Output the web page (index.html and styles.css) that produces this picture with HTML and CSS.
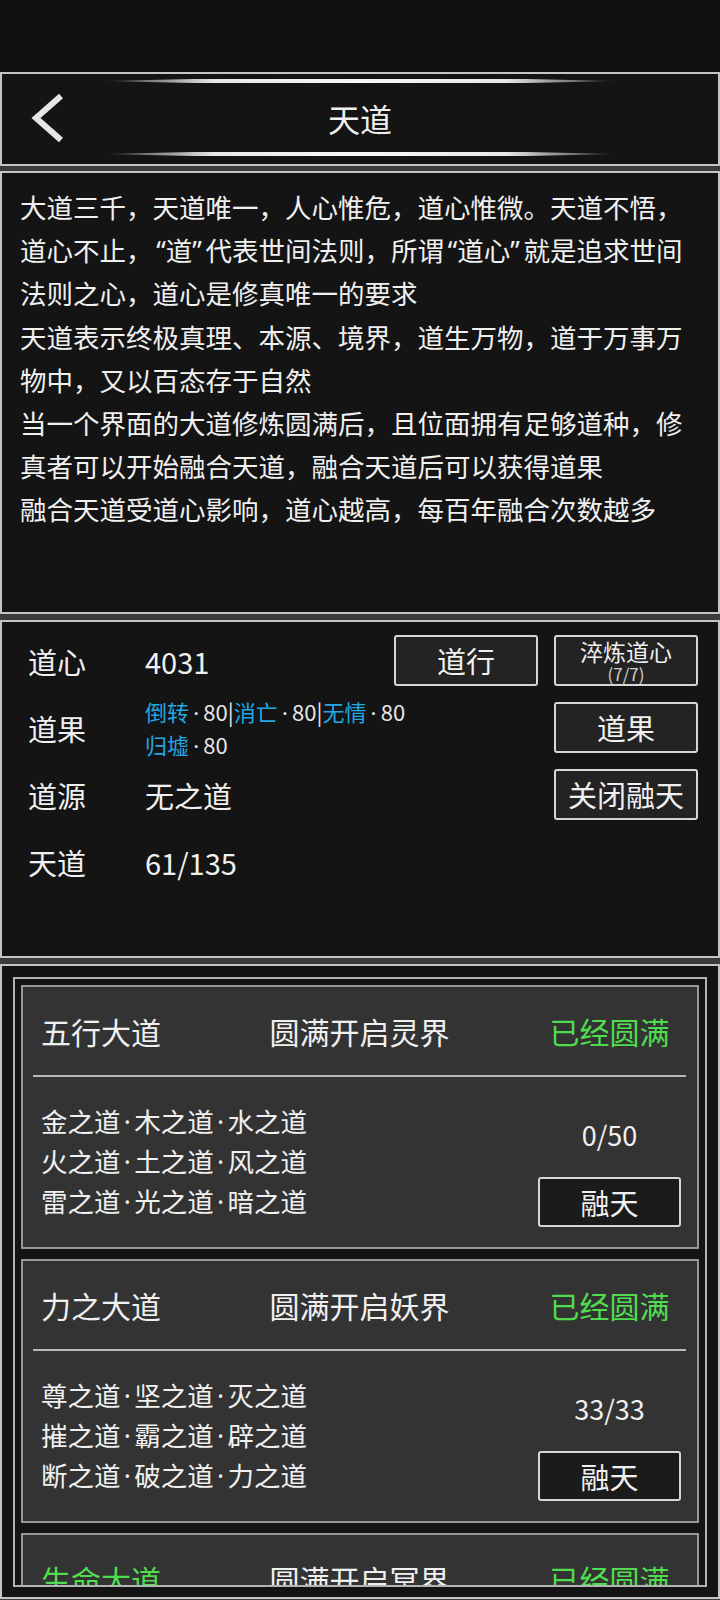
FILE: index.html
```html
<!DOCTYPE html>
<html lang="zh-CN">
<head>
    <meta charset="utf-8">
    <link rel="stylesheet" href="styles.css">
</head>
<body>
    <div class="status-bar"></div>

    <div class="panel top-bar">
        <div class="glow"></div>
        <div class="title-row">
            <div class="back">
                <svg width="40" height="60" viewBox="0 0 40 60">
                    <polyline points="33,8 8,30 33,52" fill="none" stroke="#e6e6e6" stroke-width="6"/>
                </svg>
            </div>
            <h1>天道</h1>
            <div></div>
        </div>
        <div class="glow"></div>
    </div>

    <div class="panel intro">
        <p>大道三千，天道唯一，人心惟危，道心惟微。天道不悟，道心不止，<span class="q-open">“</span>道<span class="q-close">”</span>代表世间法则，所谓<span class="q-open">“</span>道心<span class="q-close">”</span>就是追求世间法则之心，道心是修真唯一的要求</p>
        <p>天道表示终极真理、本源、境界，道生万物，道于万事万物中，又以百态存于自然</p>
        <p>当一个界面的大道修炼圆满后，且位面拥有足够道种，修真者可以开始融合天道，融合天道后可以获得道果</p>
        <p>融合天道受道心影响，道心越高，每百年融合次数越多</p>
    </div>

    <div class="panel stats">
        <div class="stat-row">
            <span class="label">道心</span>
            <span class="value">4031</span>
            <button class="btn">道行</button>
            <button class="btn btn-small"><span>淬炼道心</span><span class="sub">(7/7)</span></button>
        </div>
        <div class="stat-row">
            <span class="label">道果</span>
            <div class="value fruits">
                <div><span class="blue">倒转</span><i>·</i>80|<span class="blue">消亡</span><i>·</i>80|<span class="blue">无情</span><i>·</i>80</div>
                <div><span class="blue">归墟</span><i>·</i>80</div>
            </div>
            <button class="btn">道果</button>
        </div>
        <div class="stat-row">
            <span class="label">道源</span>
            <span class="value">无之道</span>
            <button class="btn">关闭融天</button>
        </div>
        <div class="stat-row">
            <span class="label">天道</span>
            <span class="value">61/135</span>
        </div>
    </div>

    <div class="panel realms">
        <div class="realm-list">
            <div class="realm">
                <div class="realm-head">
                    <span class="realm-name">五行大道</span>
                    <span class="realm-goal">圆满开启灵界</span>
                    <span class="realm-state done">已经圆满</span>
                </div>
                <div class="realm-body">
                    <div class="realm-ways">
                        金之道<i>·</i>木之道<i>·</i>水之道<br>
                        火之道<i>·</i>土之道<i>·</i>风之道<br>
                        雷之道<i>·</i>光之道<i>·</i>暗之道
                    </div>
                    <div class="realm-side">
                        <div class="realm-count">0/50</div>
                        <button class="btn btn-dark">融天</button>
                    </div>
                </div>
            </div>
            <div class="realm">
                <div class="realm-head">
                    <span class="realm-name">力之大道</span>
                    <span class="realm-goal">圆满开启妖界</span>
                    <span class="realm-state done">已经圆满</span>
                </div>
                <div class="realm-body">
                    <div class="realm-ways">
                        尊之道<i>·</i>坚之道<i>·</i>灭之道<br>
                        摧之道<i>·</i>霸之道<i>·</i>辟之道<br>
                        断之道<i>·</i>破之道<i>·</i>力之道
                    </div>
                    <div class="realm-side">
                        <div class="realm-count">33/33</div>
                        <button class="btn btn-dark">融天</button>
                    </div>
                </div>
            </div>
            <div class="realm">
                <div class="realm-head">
                    <span class="realm-name done">生命大道</span>
                    <span class="realm-goal">圆满开启冥界</span>
                    <span class="realm-state done">已经圆满</span>
                </div>
            </div>
        </div>
    </div>
</body>
</html>
```

FILE: styles.css
```css
:root {
    --line: #c4c4c4;
    --panel: #141414;
    --green: #4fdc4f;
    --blue: #22a7e3;
}

* {
    box-sizing: border-box;
}

body {
    margin: 0;
    width: 720px;
    height: 1600px;
    overflow: hidden;
    background-color: #3c3c3c;
    color: #f0f0f0;
    font-family: "Noto Sans CJK SC", sans-serif;
}

/* narrow middle dot between names */
i {
    display: inline-block;
    width: 0.52em;
    font-style: normal;
    text-align: center;
    font-family: "Noto Sans", sans-serif;
    line-height: 1;
}

/* half width quotes */
.q-open, .q-close {
    display: inline-block;
    width: 0.5em;
    font-family: "Noto Sans", sans-serif;
    line-height: 1;
}
.q-open {
    text-align: right;
}
.q-close {
    text-align: left;
}

.status-bar {
    height: 72px;
    background-color: #111;
}

.panel {
    background-color: var(--panel);
    border: 2px solid var(--line);
}

/* header */
.top-bar {
    height: 94px;
    display: flex;
    flex-direction: column;
}
.glow {
    align-self: center;
    width: 520px;
    height: 4px;
    margin-top: 5px;
    background: linear-gradient(90deg, rgba(120,120,120,0) 0, #666 7%, #e8e8e8 22%, #f8f8f8 50%, #e8e8e8 78%, #666 93%, rgba(120,120,120,0) 100%);
    clip-path: polygon(0 50%, 18% 0, 82% 0, 100% 50%, 82% 100%, 18% 100%);
}
.glow:last-child {
    margin-top: 0;
    margin-bottom: 8px;
}
.title-row {
    flex: 1;
    display: grid;
    grid-template-columns: 1fr auto 1fr;
    align-items: center;
}
.back {
    padding-left: 26px;
    display: flex;
}
h1 {
    margin: 0;
    font-size: 32px;
    font-weight: normal;
    line-height: 40px;
}

/* intro text */
.intro {
    height: 443px;
    margin-top: 5px;
    padding: 12px 18px;
    font-size: 26.5px;
    line-height: 43.2px;
}
.intro p {
    margin: 0;
}

/* stats */
.stats {
    height: 338px;
    margin-top: 6px;
    padding: 13px 20px 0 26px;
}
.stat-row {
    display: flex;
    align-items: center;
    height: 51px;
    margin-bottom: 16px;
    font-size: 29px;
}
.label {
    width: 117px;
}
.value {
    flex: 1;
}
.fruits {
    font-size: 22px;
    line-height: 33px;
    color: #e6e6e6;
    white-space: nowrap;
}
.fruits i {
    width: 0.65em;
}
.blue {
    color: var(--blue);
}

.btn {
    width: 144px;
    height: 51px;
    margin-left: 16px;
    padding: 0;
    background-color: #232323;
    color: #f0f0f0;
    border: 2px solid #d6d6d6;
    border-radius: 3px;
    font-family: inherit;
    font-size: 29px;
    line-height: 1;
}
.btn-small {
    display: flex;
    flex-direction: column;
    align-items: center;
    justify-content: center;
    font-size: 23px;
    line-height: 24px;
}
.btn-small .sub {
    margin-top: 2px;
    font-size: 17px;
    line-height: 17px;
    color: #d0d0d0;
}
.btn-dark {
    width: 143px;
    height: 50px;
    margin: 0;
    background-color: #1b1b1b;
}

/* realm list */
.realms {
    height: 635px;
    margin-top: 6px;
    padding: 11px 11px 0 11px;
}
.realm-list {
    height: 610px;
    padding: 6px 6px 0 6px;
    border: 2px solid #b4b4b4;
    overflow: hidden;
}
.realm {
    height: 264px;
    margin-bottom: 10px;
    background-color: #333;
    border: 2px solid #979797;
}
.realm-head {
    height: 90px;
    margin: 0 11px 0 10px;
    border-bottom: 2px solid #b8b8b8;
    display: grid;
    grid-template-columns: 1fr 200px 1fr;
    align-items: center;
    font-size: 30px;
}
.realm-name {
    padding-left: 8px;
}
.realm-goal {
    text-align: center;
    white-space: nowrap;
}
.realm-state {
    justify-self: end;
    width: 143px;
    margin-right: 5px;
    text-align: center;
}
.done {
    color: var(--green);
}
.realm-body {
    height: 168px;
    display: flex;
    align-items: center;
    justify-content: space-between;
    padding: 0 16px 0 18px;
}
.realm-ways {
    font-size: 26.5px;
    line-height: 40px;
}
.realm-side {
    align-self: stretch;
    display: flex;
    flex-direction: column;
    justify-content: flex-end;
    align-items: center;
    width: 143px;
    padding-bottom: 18px;
}
.realm-count {
    font-size: 27px;
    line-height: 40px;
    margin-bottom: 22px;
}
```
